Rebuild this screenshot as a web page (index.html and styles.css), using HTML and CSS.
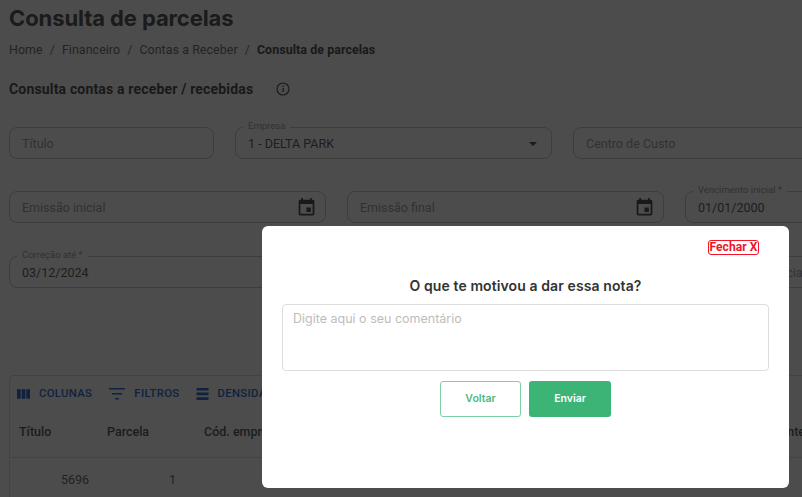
FILE: index.html
```html
<!DOCTYPE html>
<html lang="pt-BR">
<head>
<meta charset="utf-8">
<title>Consulta de parcelas</title>
<link rel="stylesheet" href="styles.css">
</head>
<body>
<main class="page">
  <h1 class="title">Consulta de parcelas</h1>
  <nav class="crumbs">
    <span>Home</span><i>/</i><span>Financeiro</span><i>/</i><span>Contas a Receber</span><i>/</i><b>Consulta de parcelas</b>
  </nav>
  <div class="section">
    <h2>Consulta contas a receber / recebidas</h2>
    <svg class="info" viewBox="0 0 14 14" width="14" height="14"><circle cx="7" cy="7" r="6" fill="none" stroke="#555" stroke-width="1.1"/><rect x="6.5" y="6" width="1.3" height="4" fill="#555" transform="rotate(8 7 8)"/><rect x="6.7" y="3.6" width="1.3" height="1.3" fill="#555"/></svg>
  </div>

  <div class="row row-1">
    <div class="field w-205"><span class="ph">Título</span></div>
    <div class="field w-317"><label>Empresa</label><span class="val">1 - DELTA PARK</span><span class="caret"></span></div>
    <div class="field w-317"><span class="ph">Centro de Custo</span></div>
  </div>
  <div class="row row-2">
    <div class="field w-317"><span class="ph">Emissão inicial</span>
      <svg class="cal" viewBox="0 0 24 24" width="21" height="21"><path d="M17 12h-5v5h5v-5zM16 1v2H8V1H6v2H5c-1.11 0-1.99.9-1.99 2L3 19c0 1.1.89 2 2 2h14c1.1 0 2-.9 2-2V5c0-1.1-.9-2-2-2h-1V1h-2zm3 18H5V8h14v11z"/></svg></div>
    <div class="field w-317"><span class="ph">Emissão final</span>
      <svg class="cal" viewBox="0 0 24 24" width="21" height="21"><path d="M17 12h-5v5h5v-5zM16 1v2H8V1H6v2H5c-1.11 0-1.99.9-1.99 2L3 19c0 1.1.89 2 2 2h14c1.1 0 2-.9 2-2V5c0-1.1-.9-2-2-2h-1V1h-2zm3 18H5V8h14v11z"/></svg></div>
    <div class="field w-317"><label>Vencimento inicial *</label><span class="val">01/01/2000</span></div>
  </div>
  <div class="row row-3">
    <div class="field w-317"><label>Correção até *</label><span class="val">03/12/2024</span></div>
    <div class="field w-317"></div>
    <div class="field w-317"><span class="ph">Data de ocorrência</span></div>
  </div>

  <section class="grid">
    <div class="toolbar">
      <span class="tool">
        <svg viewBox="0 0 14 10" width="13" height="10"><path d="M0 0h4v10H0zM5 0h4v10H5zM10 0h4v10h-4z"/></svg>COLUNAS
      </span>
      <span class="tool">
        <svg viewBox="0 0 16 12" width="16" height="12"><path d="M0 0h16v1.6H0zM3 5h10v1.6H3zM6 10h4v1.6H6z"/></svg>FILTROS
      </span>
      <span class="tool">
        <svg viewBox="0 0 12 12" width="13" height="12"><path d="M0 0h12v2.6H0zM0 4.6h12v2.6H0zM0 9.3h12V12H0z"/></svg>DENSIDADE
      </span>
    </div>
    <div class="thead">
      <span class="c-a">Título</span><span class="c-b">Parcela</span><span class="c-c">Cód. empresa</span><span class="c-d">Cliente</span>
    </div>
    <div class="tbody">
      <span class="c-a num">5696</span><span class="c-b num">1</span>
    </div>
  </section>
</main>

<div class="overlay"></div>
<div class="modal" role="dialog">
  <div class="modal-top"><button class="close">Fechar X</button></div>
  <h3>O que te motivou a dar essa nota?</h3>
  <div class="textarea">Digite aqui o seu comentário</div>
  <div class="actions">
    <button class="btn ghost">Voltar</button>
    <button class="btn solid">Enviar</button>
  </div>
</div>
</body>
</html>
```

FILE: styles.css
```css
* { box-sizing: border-box; }
html, body { margin: 0; height: 100%; overflow: hidden; background: #fff; }
body { font-family: Roboto, sans-serif; color: #212121; }

.page { width: 1100px; padding: 5px 0 0 9px; }
.title { margin: 0; font: 700 22px/26px Inter, sans-serif; color: #5a5a5a; letter-spacing: -0.1px; }
.crumbs { margin-top: 9px; display: flex; align-items: center; font-size: 12.4px; line-height: 20px; color: #777; letter-spacing: .08px; }
.crumbs i { font-style: normal; margin: 0 7px; color: #888; }
.crumbs b { font-weight: 700; color: #555; }
.section { margin-top: 18px; display: flex; align-items: center; height: 22px; }
.section h2 { margin: 0; font: 700 14px/22px Roboto, sans-serif; color: #555; letter-spacing: .17px; }
.info { margin-left: 23px; }

.row { display: flex; gap: 21px; }
.row-1 { margin-top: 27px; }
.row-2 { margin-top: 32px; }
.row-3 { margin-top: 33px; }
.field { position: relative; height: 32px; border: 1px solid rgba(0,0,0,.2); border-radius: 8px; display: flex; align-items: center; padding: 0 12px; font-size: 12.5px; flex: none; }
.w-205 { width: 205px; }
.w-317 { width: 317px; }
.ph { color: #a6a6a6; white-space: nowrap; }
.val { color: #666; }
.field label { position: absolute; left: 7px; top: -8px; padding: 0 5px; background: #fff; font-size: 9.5px; line-height: 11px; color: #a6a6a6; }
.caret { position: absolute; right: 14px; top: 14px; width: 0; height: 0; border-style: solid; border-width: 4px 4.5px 0; border-color: #5a5a5a transparent transparent; }
.cal { position: absolute; right: 8px; top: 5px; fill: #555; }

.grid { margin-top: 87px; border: 1px solid rgba(0,0,0,.12); border-radius: 4px 0 0 0; width: 1080px; }
.toolbar { display: flex; height: 35px; align-items: center; padding: 0 0 0 7px; }
.tool { display: flex; align-items: center; gap: 9px; font-size: 11.3px; font-weight: 500; letter-spacing: .35px; color: #3a72cc; margin-right: 16px; }
.tool:first-child { margin-right: 17px; }
.tool svg { fill: #3a72cc; flex: none; }
.thead, .tbody { display: flex; font-size: 12.5px; align-items: center; white-space: nowrap; }
.thead { height: 47px; padding-bottom: 6px; font-weight: 500; color: #5f5f5f; border-bottom: 1px solid rgba(0,0,0,.12); }
.tbody { height: 43px; color: #707070; }
.c-a { width: 97px; padding-left: 9px; }
.c-b { width: 97px; padding-left: 0; }
.c-c { width: 562px; }
.num { text-align: right; }
.c-a.num { width: 79px; padding: 0; }
.c-b.num { width: 87px; padding: 0; }

.overlay { position: fixed; inset: 0; background: rgba(0,0,0,.7); }
.modal { position: fixed; left: 262px; top: 226px; width: 527px; height: 262px; background: #fff; border-radius: 6px; padding: 14px 20px 0; font-family: Inter, sans-serif; }
.modal-top { display: flex; justify-content: flex-end; padding-right: 10px; height: 15px; }
.close { height: 15px; padding: 0; width: 51px; white-space: nowrap; font: 700 12px/13px Roboto, sans-serif; color: #f01528; background: #fff; border: 1px solid #f01528; border-radius: 3px; letter-spacing: .1px; }
.modal h3 { margin: 21px 0 0; text-align: center; font: 600 14px/19px Inter, sans-serif; color: #333; letter-spacing: .1px; }
.textarea { margin-top: 9px; height: 67px; border: 1px solid #ddd; border-radius: 4px; padding: 6px 10px; font: 400 12.5px/15px Inter, sans-serif; color: #bdbdbd; }
.actions { margin-top: 10px; display: flex; justify-content: center; gap: 8px; }
.btn { height: 36px; border-radius: 3px; font: 600 10.5px/14px Inter, sans-serif; cursor: pointer; }
.ghost { width: 81px; background: #fff; color: #4db883; border: 1.5px solid #7fcfa6; }
.solid { width: 82px; background: #3cb475; color: #fff; border: 0; }
```
